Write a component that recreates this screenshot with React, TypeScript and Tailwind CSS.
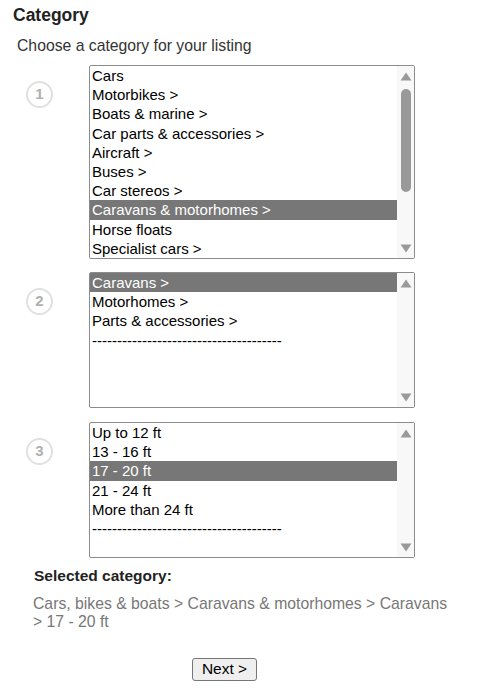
const font = { fontFamily: '"Liberation Sans", Arial, sans-serif' };

const dashes = "-".repeat(38);

function Step({ n }: { n: number }) {
  return (
    <div className="mt-[16px] flex h-[27px] w-[27px] shrink-0 items-center justify-center rounded-full border-2 border-[#e0e0e0] text-[15px] font-bold text-[#b0b0b0]">
      {n}
    </div>
  );
}

function Scrollbar({ thumb }: { thumb?: boolean }) {
  return (
    <div className="flex w-[17px] shrink-0 flex-col items-center bg-[#f8f8f8] pt-[6px] pb-[5px]">
      <svg width="12" height="9" viewBox="0 0 12 9" className="shrink-0">
        <path d="M6 0.5 L11.5 8.5 L0.5 8.5 Z" fill="#9a9a9a" />
      </svg>
      <div className="flex flex-1 justify-center py-[8px]">
        {thumb && <div className="w-[10px] rounded-full bg-[#999999]" style={{ height: 103 }} />}
      </div>
      <svg width="12" height="9" viewBox="0 0 12 9" className="shrink-0">
        <path d="M0.5 0.5 L11.5 0.5 L6 8.5 Z" fill="#9a9a9a" />
      </svg>
    </div>
  );
}

function ListBox({
  items,
  selected,
  height,
  thumb,
}: {
  items: string[];
  selected: number;
  height: number;
  thumb?: boolean;
}) {
  return (
    <div
      className="ml-[36px] flex w-[326px] overflow-hidden rounded-[2px] border border-[#8c8c8c] bg-white"
      style={{ height }}
    >
      <div className="flex-1 overflow-hidden">
        {items.map((it, i) => (
          <div
            key={i}
            className={
              i === selected
                ? "h-[19.2px] whitespace-nowrap bg-[#777777] pl-[2px] text-[15px] leading-[19px] text-white"
                : "h-[19.2px] whitespace-nowrap pl-[2px] text-[15px] leading-[19px] text-black"
            }
          >
            {it}
          </div>
        ))}
      </div>
      <Scrollbar thumb={thumb} />
    </div>
  );
}

export default function App() {
  return (
    <div className="min-h-[697px] w-[500px] bg-white text-[#222]" style={font}>
      <h2 className="pl-[13px] pt-[5px] text-[17.5px] font-bold leading-[20px] text-[#222]">Category</h2>
      <p className="mt-[12px] pl-[17px] text-[15.75px] leading-[18px] text-[#333]">
        Choose a category for your listing
      </p>

      <div className="mt-[10px] flex flex-col pl-[26px]">
        <div className="flex">
          <Step n={1} />
          <ListBox
            height={194}
            thumb
            selected={7}
            items={[
              "Cars",
              "Motorbikes >",
              "Boats & marine >",
              "Car parts & accessories >",
              "Aircraft >",
              "Buses >",
              "Car stereos >",
              "Caravans & motorhomes >",
              "Horse floats",
              "Specialist cars >",
            ]}
          />
        </div>
        <div className="mt-[13px] flex">
          <Step n={2} />
          <ListBox
            height={136}
            selected={0}
            items={["Caravans >", "Motorhomes >", "Parts & accessories >", dashes]}
          />
        </div>
        <div className="mt-[14px] flex">
          <Step n={3} />
          <ListBox
            height={136}
            selected={2}
            items={["Up to 12 ft", "13 - 16 ft", "17 - 20 ft", "21 - 24 ft", "More than 24 ft", dashes]}
          />
        </div>
      </div>

      <div className="mt-[9px] pl-[34px] text-[15.5px] font-bold leading-[18px] text-[#222]">Selected category:</div>
      <p className="mt-[10px] w-[450px] pl-[33px] text-[15.75px] leading-[18px] text-[#777]">
        Cars, bikes &amp; boats &gt; Caravans &amp; motorhomes &gt; Caravans &gt; 17 - 20 ft
      </p>

      <div className="mt-[26px] pl-[192px]">
        <button className="h-[23px] w-[65px] rounded-[3px] border border-[#767676] bg-[#efefef] text-[15.5px] leading-[20px] text-black">
          Next &gt;
        </button>
      </div>
    </div>
  );
}
